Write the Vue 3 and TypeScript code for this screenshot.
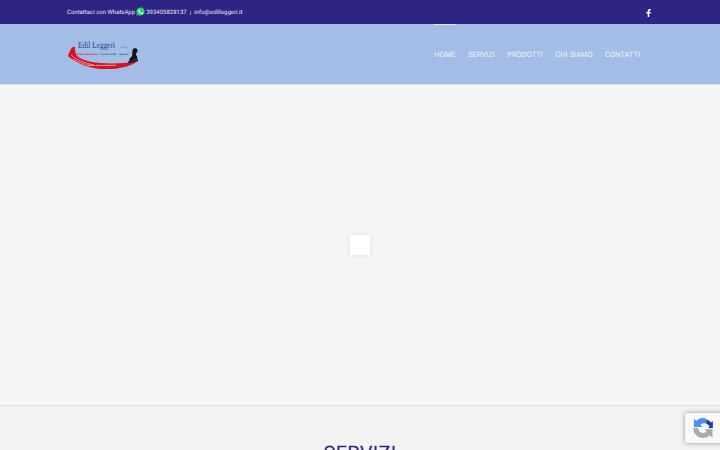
<script setup lang="ts">
const navItems: string[] = ['HOME', 'SERVIZI', 'PRODOTTI', 'CHI SIAMO', 'CONTATTI']
</script>

<template>
  <div class="page">
    <header class="topbar">
      <div class="wrap topbar-in">
        <div class="contact">
          <span>Contattaci con WhatsApp</span>
          <svg class="wa" viewBox="0 0 24 24" width="9" height="9">
            <path fill="#25d366" d="M12 1a11 11 0 0 0-9.400 16.600L1 23l5.600-1.500A11 11 0 1 0 12 1z" />
            <path fill="#fff" d="M8.300 6.500c-.3 0-.8.100-1.200.600-.5.500-1.200 1.300-1.200 2.800s1.200 3.100 1.400 3.300c.2.200 2.300 3.600 5.700 4.900 2.800 1.100 3.400.900 4 .8.600-.1 2-.8 2.300-1.600.3-.8.300-1.500.2-1.600-.1-.2-.3-.3-.7-.4l-2.300-1.100c-.3-.1-.6-.2-.8.200l-1.100 1.300c-.2.200-.4.300-.8.100-.3-.2-1.400-.5-2.700-1.700-1-.9-1.700-2-1.900-2.300-.2-.4 0-.6.200-.7l.9-1.300c.1-.2.100-.4 0-.6L9.500 7.200c-.3-.6-.6-.7-.8-.7z" />
          </svg>
          <span>393405828137</span>
          <span class="sep"></span>
          <span>info@edilleggeri.it</span>
        </div>
        <svg class="fb" viewBox="0 0 10 16" width="5" height="8">
          <path fill="#fff" d="M6.500 16V9h2.600l.4-3H6.500V4.300c0-.9.300-1.400 1.500-1.400h1.600V.2C9.300.1 8.400 0 7.300 0 5 0 3.400 1.400 3.400 3.900V6H.8v3h2.600v7z" />
        </svg>
      </div>
    </header>

    <nav class="navbar">
      <div class="wrap navbar-in">
        <svg class="logo" viewBox="0 0 72 30" width="72" height="30">
          <text class="logo-name" transform="translate(11 9) scale(1 1.250)">Edil Leggeri</text>
          <text x="54" y="9" class="logo-srl">s.r.l.s</text>
          <path fill="#d8121f" d="M5 8.500C3 11 2 14 1 17c5 5 19 12 32 13 15 1 31-2 38-8-7 2-23 3-38 2-11-1-20-4-23-7-2-3-2-6-2-9.500z" />
          <path fill="none" stroke="#fff" stroke-width=".6" opacity=".8" d="M4 16c5 4.500 13 8 23 10M6 20c5 3 11 5 16 6.500" />
          <text x="10" y="15.500" class="logo-tag t-red">Pittura Decorativa</text>
          <text x="33" y="15.500" class="logo-tag t-green">Gestione Edili</text>
          <text x="52" y="15.500" class="logo-tag t-blue">Agraria</text>
          <text x="21" y="27" class="logo-foot">Qualità e Professionalità dal 2000</text>
          <path fill="#10131c" d="M66.500 9.500c1.500-.8 3.800-.2 4 1.500.2 1.200-.5 2.300-1.200 3.200-.5.800-.5 1.500.2 2.300.8.900.9 2.200.5 3.500l-7 2.200c-1-.8-1-2 0-3 1.300-1.200 2.200-2.300 2.300-4 .1-2-.2-4.600 1.200-5.700z" />
          <path fill="#10131c" d="M61 22.500 71 20v2l-9.500 2.300z" />
        </svg>
        <ul class="menu">
          <li v-for="(item, i) in navItems" :key="item" :class="{ active: i === 0 }">{{ item }}</li>
        </ul>
      </div>
    </nav>

    <main class="hero">
      <div class="loader"></div>
    </main>

    <section class="services">
      <h2>SERVIZI</h2>
    </section>

    <aside class="recaptcha">
      <svg viewBox="0 0 24 24" width="24" height="24">
        <path fill="#1c3aa9" d="M21.800 12 17 12.200l1.600-1.700c-.9-1.400-1.900-2.300-3.400-2.700V3.400c2.200.5 4.100 1.800 5.100 3.200l1.600-1.500z" />
        <path fill="#4a90f5" d="M12 2c1.100 0 2.200.2 3.200.6v5.200c-2-.9-4.200-.4-5.700 1.300L11.300 11H3V2.700l2.300 2.300C7 3.100 9.300 2 12 2z" />
        <path fill="#ababab" d="M2.200 12 7 12c.2 2.800 2.200 4.900 5 4.900 1.500 0 2.500-.4 3.500-1.400L13.500 13.200H21.500V22l-2.600-2.500C17 21 14.800 22 12 22 6.500 22 2.200 17.500 2.200 12z" />
      </svg>
    </aside>
  </div>
</template>

<style scoped>
.page {
  position: relative;
  width: 720px;
  height: 450px;
  overflow: hidden;
  background: #f5f5f5;
  font-family: Roboto, "Liberation Sans", sans-serif;
  text-rendering: geometricPrecision;
}
.wrap {
  width: 585px;
  margin-left: 67px;
  display: flex;
  align-items: center;
  justify-content: space-between;
}
.topbar {
  height: 24px;
  background: #2e2484;
  color: #e6e4f1;
  font-size: 6px;
}
.topbar-in {
  height: 24px;
}
.contact {
  display: flex;
  align-items: center;
  gap: 0.800px;
  padding-top: 1.500px;
}
.wa {
  margin: -2px 0 0 0.500px;
}
.sep {
  width: 1px;
  height: 4px;
  background: #8a84bd;
  margin: 0 2.500px;
}
.fb {
  margin: 2px 1px 0 0;
}
.navbar {
  height: 60px;
  background: #a3bde6;
  border-bottom: 1px solid #dfe3ea;
}
.navbar-in {
  height: 60px;
}
.logo {
  display: block;
}
.logo-name {
  font: 7.400px "Liberation Serif", serif;
  fill: #2f3a8c;
}
.logo-srl {
  font: 3px "Liberation Serif", serif;
  fill: #2f3a8c;
}
.logo-tag {
  font: italic 700 2.800px "Liberation Serif", serif;
}
.t-red {
  fill: #d8121f;
}
.t-green {
  fill: #0d7a50;
}
.t-blue {
  fill: #2a3f9e;
}
.logo-foot {
  font: italic 700 2px "Liberation Serif", serif;
  fill: #ffffff;
}
.menu {
  list-style: none;
  margin: 0 12px 0 0;
  padding: 0;
  display: flex;
  gap: 12.500px;
  font-size: 7.500px;
  color: #eef2fa;
}
.menu li {
  position: relative;
  height: 60px;
  line-height: 61px;
}
.menu li.active::before {
  content: "";
  position: absolute;
  left: 0;
  right: 0;
  top: 0;
  height: 1px;
  background: #e4e8f4;
}
.hero {
  height: 320px;
  display: flex;
  align-items: center;
  justify-content: center;
  background: #f5f5f5;
  border-bottom: 1px solid #e2e2e2;
}
.loader {
  width: 20px;
  height: 20px;
  background: #fff;
  border-radius: 1px;
  box-shadow: 0 0 6px rgba(0, 0, 0, 0.08);
}
.services {
  background: #f2f2f2;
  height: 44px;
  text-align: center;
  overflow: hidden;
}
.services h2 {
  margin: 0;
  padding-top: 36px;
  font-size: 20px;
  line-height: 22px;
  font-weight: 400;
  color: #2e2484;
  letter-spacing: 0.300px;
}
.recaptcha {
  position: absolute;
  left: 685px;
  top: 413px;
  width: 40px;
  height: 30px;
  display: flex;
  align-items: center;
  padding-left: 6px;
  box-sizing: border-box;
  background: #f9f9f9;
  border-radius: 2px;
  box-shadow: 0 0 4px rgba(0, 0, 0, 0.4);
}
</style>
